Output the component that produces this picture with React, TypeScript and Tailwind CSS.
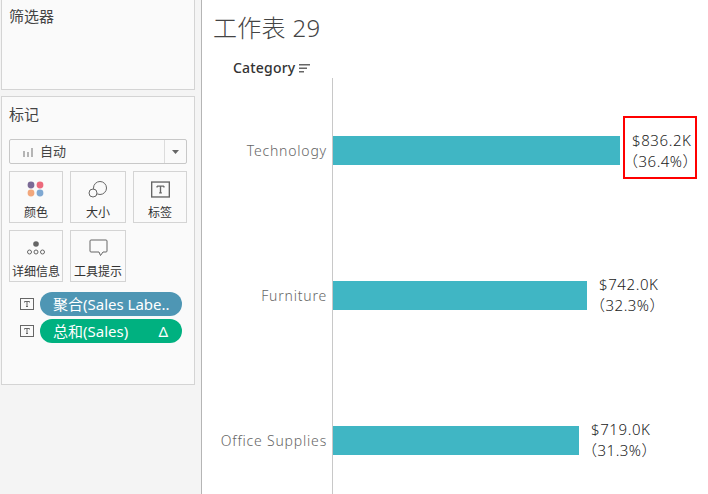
const cjk = "font-['Noto_Sans','Noto_Sans_CJK_SC',sans-serif]";

function Tile({ label, w, children }: { label: string; w: string; children: React.ReactNode }) {
  return (
    <div className={`${w} h-[52px] border border-[#d4d4d4] flex flex-col items-center`}>
      <div className="h-[32px] shrink-0 flex items-center justify-center pt-[2px]">{children}</div>
      <div className="h-[18px] shrink-0 text-[12px] leading-[18px] text-[#333] whitespace-nowrap">{label}</div>
    </div>
  );
}

function TBox({ size = 14 }: { size?: number }) {
  return (
    <svg width={size} height={size} viewBox="0 0 14 14">
      <rect x="0.5" y="1.5" width="13" height="11" fill="none" stroke="#666" />
      <path d="M4.5 4.5h5M7 4.5v5M6 9.5h2M4.5 4.5v1M9.5 4.5v1" stroke="#666" fill="none" />
    </svg>
  );
}

function Values({ v, p }: { v: string; p: string }) {
  return (
    <>
      <span className="tracking-[0.6px] font-light">{v}</span>
      <span className="-ml-[9px] tracking-[0.5px] font-light">{p}</span>
    </>
  );
}

function Row({ label, barW, v, p, boxed }: { label: string; barW: string; v: string; p: string; boxed?: boolean }) {
  return (
    <div className="h-[145px] shrink-0 flex items-center">
      <div className="w-[130px] pr-[5px] text-right text-[14px] font-light text-[#666] tracking-[0.8px] whitespace-nowrap">{label}</div>
      <div className="w-px h-full bg-[#c8c8c8]" />
      <div className={`${barW} h-[29px] bg-[#40b6c4] shrink-0`} />
      {boxed ? (
        <div className="ml-[3px] mb-[6px] w-[74px] h-[63px] border-2 border-[#ff0000] flex flex-col justify-center pt-[6px] pl-[7px] text-[15px] leading-[21px] text-[#222] whitespace-nowrap">
          <Values v={v} p={p} />
        </div>
      ) : (
        <div className="ml-[12px] mb-[2px] flex flex-col text-[15px] leading-[21px] text-[#222] whitespace-nowrap">
          <Values v={v} p={p} />
        </div>
      )}
    </div>
  );
}

export default function App() {
  return (
    <div className={`w-[708px] h-[494px] flex overflow-hidden bg-white ${cjk}`}>
      <aside className="w-[202px] h-full shrink-0 bg-[#f4f4f4] border-r border-[#b5b5b5] pl-px">
        <section className="w-[194px] h-[90px] border border-t-0 border-[#d4d4d4] bg-[#fafafa] px-[7px] pt-[6px]">
          <div className="text-[15px] leading-[20px] text-[#444]">筛选器</div>
        </section>
        <section className="w-[194px] h-[289px] mt-[6px] border border-[#d4d4d4] bg-[#fafafa] px-[7px] pt-[7px]">
          <div className="text-[15px] leading-[20px] text-[#444]">标记</div>
          <div className="mt-[15px] w-[178px] h-[25px] border border-[#c8c8c8] rounded-[2px] bg-[#fafafa] flex items-center">
            <svg width="11" height="10" viewBox="0 0 11 10" className="ml-[13px]">
              <rect x="0" y="4" width="2" height="6" fill="#b5b5b5" />
              <rect x="4" y="5" width="2" height="5" fill="#b5b5b5" />
              <rect x="8" y="1" width="2" height="9" fill="#b5b5b5" />
            </svg>
            <span className="ml-[6px] text-[13px] text-[#444] flex-1">自动</span>
            <div className="w-[22px] h-full border-l border-[#dcdcdc] flex items-center justify-center">
              <svg width="7" height="4" viewBox="0 0 7 4"><path d="M0 0h7L3.5 4z" fill="#666" /></svg>
            </div>
          </div>
          <div className="mt-[7px] flex gap-[7px]">
            <Tile label="颜色" w="w-[54px]">
              <svg width="18" height="16" viewBox="0 0 18 16">
                <circle cx="4" cy="4" r="3.4" fill="#7b6a96" />
                <circle cx="13" cy="4" r="3.4" fill="#ec6a7c" />
                <circle cx="4" cy="12" r="3.4" fill="#f2a77c" />
                <circle cx="13" cy="12" r="3.4" fill="#7fa8d2" />
              </svg>
            </Tile>
            <Tile label="大小" w="w-[56px]">
              <svg width="20" height="19" viewBox="0 0 20 19" fill="none" stroke="#666">
                <circle cx="12" cy="8" r="6.5" fill="#fafafa" />
                <circle cx="5" cy="13" r="4" fill="#fafafa" />
              </svg>
            </Tile>
            <Tile label="标签" w="w-[54px]">
              <TBox size={19} />
            </Tile>
          </div>
          <div className="mt-[7px] flex gap-[7px]">
            <Tile label="详细信息" w="w-[54px]">
              <svg width="20" height="16" viewBox="0 0 20 16">
                <circle cx="10" cy="4" r="2.8" fill="#666" />
                <g fill="none" stroke="#666">
                  <circle cx="3.5" cy="12" r="2" />
                  <circle cx="10" cy="12" r="2" />
                  <circle cx="16.5" cy="12" r="2" />
                </g>
              </svg>
            </Tile>
            <Tile label="工具提示" w="w-[56px]">
              <svg width="19" height="18" viewBox="0 0 19 18" fill="none" stroke="#666">
                <path d="M2 1h15a1 1 0 0 1 1 1v10a1 1 0 0 1-1 1h-3l-2.5 3.5L10 13H2a1 1 0 0 1-1-1V2a1 1 0 0 1 1-1z" />
              </svg>
            </Tile>
          </div>
          <div className="mt-[10px] flex items-center">
            <div className="w-[31px] pl-[11px] flex"><TBox size={14} /></div>
            <div className="w-[142px] h-[24px] rounded-full bg-[#4e96b4] text-white text-[15px] leading-[24px] pl-[13px] whitespace-nowrap">聚合(Sales Labe..</div>
          </div>
          <div className="mt-[3px] flex items-center">
            <div className="w-[31px] pl-[11px] flex"><TBox size={14} /></div>
            <div className="w-[142px] h-[24px] rounded-full bg-[#00b180] text-white text-[15px] leading-[24px] pl-[13px] pr-[14px] flex justify-between whitespace-nowrap">
              <span>总和(Sales)</span>
              <span>Δ</span>
            </div>
          </div>
        </section>
      </aside>
      <main className="flex-1 min-w-0 flex flex-col overflow-hidden">
        <h1 className="ml-[11px] mt-[11px] h-[34px] text-[24px] leading-[34px] font-light text-[#444] whitespace-nowrap tracking-[0.3px]">工作表 29</h1>
        <div className="ml-[31px] mt-[13px] mb-px h-[19px] flex items-center gap-[4px] text-[14px] leading-[19px] text-[#333] font-medium tracking-[0.2px]">
          <span>Category</span>
          <svg width="11" height="9" viewBox="0 0 11 9" className="mt-[2px]"><path d="M0 0h11v1.6H0zM0 3.5h8v1.6H0zM0 7h5v1.6H0z" fill="#666" /></svg>
        </div>
        <div className="flex flex-col">
          <Row label="Technology" barW="w-[287px]" v="$836.2K" p="（36.4%）" boxed />
          <Row label="Furniture" barW="w-[254px]" v="$742.0K" p="（32.3%）" />
          <Row label="Office Supplies" barW="w-[246px]" v="$719.0K" p="（31.3%）" />
        </div>
      </main>
    </div>
  );
}
